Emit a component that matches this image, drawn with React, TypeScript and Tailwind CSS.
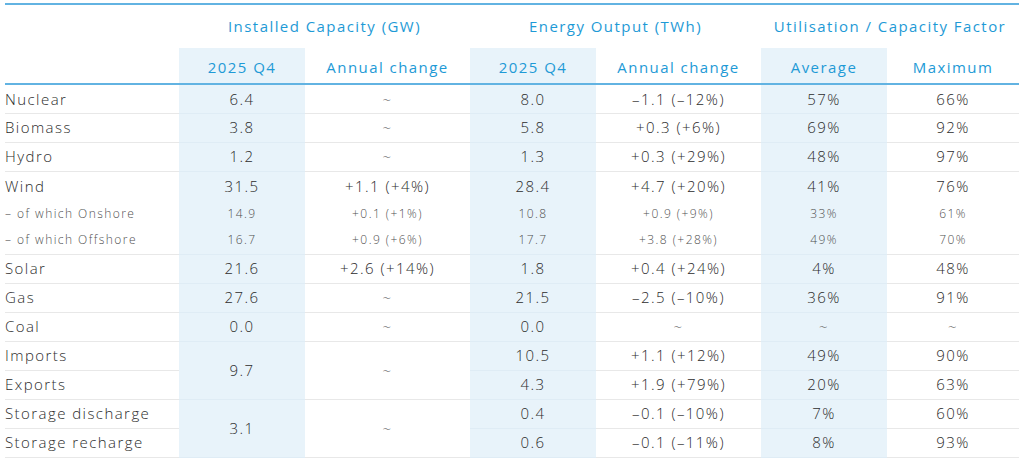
import React from 'react';

type Cell = { v: string; span?: number };
type RowDef = { label: string; cells: (Cell | null)[]; sub?: boolean; noLine?: boolean };

// null = column covered by a rowSpan from the row above
const rows: RowDef[] = [
  { label: 'Nuclear', cells: [{ v: '6.4' }, { v: '~' }, { v: '8.0' }, { v: '–1.1 (–12%)' }, { v: '57%' }, { v: '66%' }] },
  { label: 'Biomass', cells: [{ v: '3.8' }, { v: '~' }, { v: '5.8' }, { v: '+0.3 (+6%)' }, { v: '69%' }, { v: '92%' }] },
  { label: 'Hydro', cells: [{ v: '1.2' }, { v: '~' }, { v: '1.3' }, { v: '+0.3 (+29%)' }, { v: '48%' }, { v: '97%' }] },
  { label: 'Wind', noLine: true, cells: [{ v: '31.5' }, { v: '+1.1 (+4%)' }, { v: '28.4' }, { v: '+4.7 (+20%)' }, { v: '41%' }, { v: '76%' }] },
  { label: '– of which Onshore', sub: true, noLine: true, cells: [{ v: '14.9' }, { v: '+0.1 (+1%)' }, { v: '10.8' }, { v: '+0.9 (+9%)' }, { v: '33%' }, { v: '61%' }] },
  { label: '– of which Offshore', sub: true, cells: [{ v: '16.7' }, { v: '+0.9 (+6%)' }, { v: '17.7' }, { v: '+3.8 (+28%)' }, { v: '49%' }, { v: '70%' }] },
  { label: 'Solar', cells: [{ v: '21.6' }, { v: '+2.6 (+14%)' }, { v: '1.8' }, { v: '+0.4 (+24%)' }, { v: '4%' }, { v: '48%' }] },
  { label: 'Gas', cells: [{ v: '27.6' }, { v: '~' }, { v: '21.5' }, { v: '–2.5 (–10%)' }, { v: '36%' }, { v: '91%' }] },
  { label: 'Coal', cells: [{ v: '0.0' }, { v: '~' }, { v: '0.0' }, { v: '~' }, { v: '~' }, { v: '~' }] },
  { label: 'Imports', cells: [{ v: '9.7', span: 2 }, { v: '~', span: 2 }, { v: '10.5' }, { v: '+1.1 (+12%)' }, { v: '49%' }, { v: '90%' }] },
  { label: 'Exports', cells: [null, null, { v: '4.3' }, { v: '+1.9 (+79%)' }, { v: '20%' }, { v: '63%' }] },
  { label: 'Storage discharge', cells: [{ v: '3.1', span: 2 }, { v: '~', span: 2 }, { v: '0.4' }, { v: '–0.1 (–10%)' }, { v: '7%' }, { v: '60%' }] },
  { label: 'Storage recharge', cells: [null, null, { v: '0.6' }, { v: '–0.1 (–11%)' }, { v: '8%' }, { v: '93%' }] },
];

const shadedCols = [0, 2, 4];

function BodyRow({ row }: { row: RowDef }) {
  const h = row.sub ? 'h-[27px]' : 'h-[29px]';
  const line = row.noLine ? 'border-b-0' : 'border-b';
  const size = row.sub ? 'text-[12px] text-[#4f4f4f]' : 'text-[15px] text-[#2c2c2c]';
  return (
    <tr className={h}>
      <td className={`${line} border-[#e8e8e8] pl-0 text-left ${size}`}>{row.label}</td>
      {row.cells.map((c, i) => {
        if (!c) return null;
        const shaded = shadedCols.includes(i);
        const tilde = c.v === '~';
        return (
          <td
            key={i}
            rowSpan={c.span}
            className={`${line} text-center ${size} ${
              shaded ? 'bg-[#e8f3fa] border-[#dfecf5]' : 'border-[#e8e8e8]'
            } ${tilde ? 'text-[#666666]' : ''}`}
          >
            {c.v}
          </td>
        );
      })}
    </tr>
  );
}

export default function App() {
  return (
    <div className="w-[1024px] h-[463px] bg-white px-[5px] pt-[3px] font-['Open_Sans',sans-serif] font-light tracking-[0.09em]">
      <table className="w-[1014px] table-fixed border-collapse border-t-2 border-[#62b3e2]">
        <colgroup>
          <col className="w-[174px]" />
          <col className="w-[126px]" />
          <col className="w-[165px]" />
          <col className="w-[126px]" />
          <col className="w-[165px]" />
          <col className="w-[126px]" />
          <col className="w-[132px]" />
        </colgroup>
        <thead>
          <tr className="h-[44px] text-[15px] text-[#1e9ad6]">
            <th />
            <th colSpan={2} className="font-normal">Installed Capacity (GW)</th>
            <th colSpan={2} className="font-normal">Energy Output (TWh)</th>
            <th colSpan={2} className="font-normal">Utilisation / Capacity Factor</th>
          </tr>
          <tr className="h-[36px] text-[15px] text-[#1e9ad6] border-b-2 border-[#62b3e2]">
            <th />
            <th className="font-normal bg-[#e8f3fa] pt-[3px]">2025 Q4</th>
            <th className="font-normal pt-[3px]">Annual change</th>
            <th className="font-normal bg-[#e8f3fa] pt-[3px]">2025 Q4</th>
            <th className="font-normal pt-[3px]">Annual change</th>
            <th className="font-normal bg-[#e8f3fa] pt-[3px]">Average</th>
            <th className="font-normal pt-[3px]">Maximum</th>
          </tr>
        </thead>
        <tbody>
          {rows.map((r) => (
            <BodyRow key={r.label} row={r} />
          ))}
        </tbody>
      </table>
    </div>
  );
}
